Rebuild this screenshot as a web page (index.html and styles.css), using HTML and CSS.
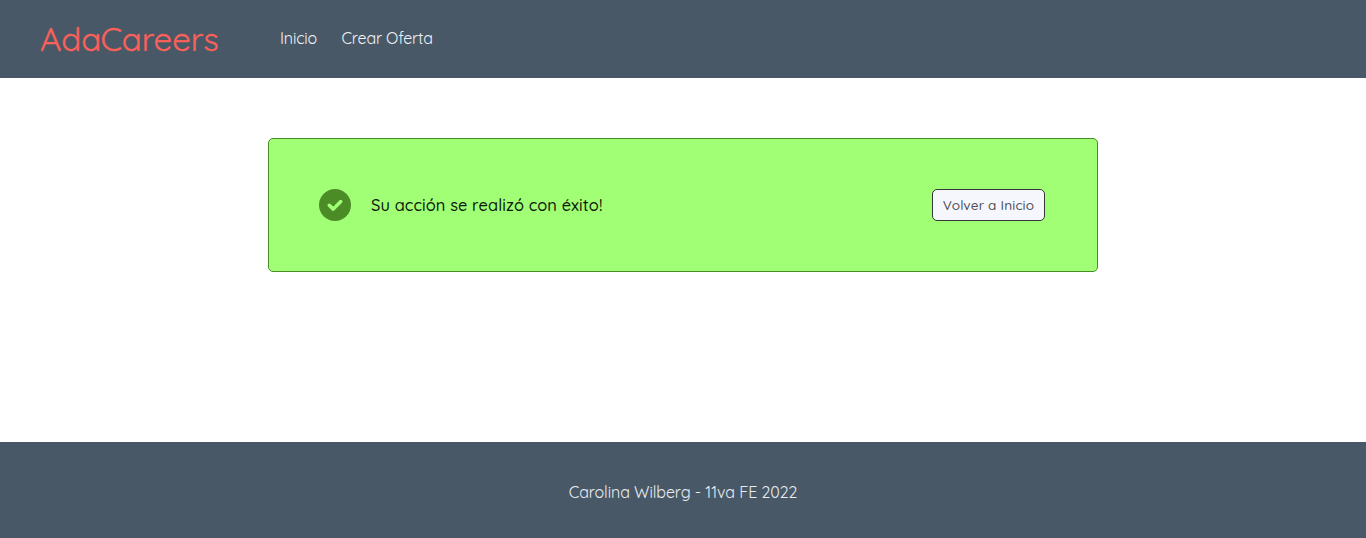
FILE: index.html
```html
<!DOCTYPE html>
<html lang="es">
<head>
<meta charset="utf-8">
<title>AdaCareers</title>
<link rel="stylesheet" href="styles.css">
</head>
<body>
<header class="navbar">
  <a class="brand">AdaCareers</a>
  <nav class="links"><a>Inicio</a><a>Crear Oferta</a></nav>
</header>
<main class="content">
  <section class="alert">
    <svg class="icon" viewBox="0 0 512 512"><path fill="#4c8c26" d="M256 0a256 256 0 1 0 0 512A256 256 0 0 0 256 0z"/><path fill="none" stroke="#a1ff75" stroke-width="56" stroke-linecap="round" stroke-linejoin="round" d="M164 260l64 62 120-122"/></svg>
    <p class="message">Su acción se realizó con éxito!</p>
    <button class="back">Volver a Inicio</button>
  </section>
</main>
<footer class="footer"><p class="credit">Carolina Wilberg - 11va FE 2022</p></footer>
</body>
</html>
```
FILE: styles.css
```css
* { box-sizing: border-box; margin: 0; }
body { min-height: 538px; display: flex; flex-direction: column; background: #fff; font: 16px/24px Quicksand, Lato, sans-serif; }
.navbar { height: 78px; display: flex; align-items: center; padding-left: 40px; background: #485866; color: #f0f2f6; }
.brand { width: 240px; color: #fb605b; font-size: 33px; font-weight: 400; line-height: 48px; letter-spacing: -0.1px; -webkit-text-stroke: 0.35px #fb605b; }
.links { display: flex; gap: 24.5px; padding-bottom: 2px; letter-spacing: -0.17px; }
.content { flex: 1; padding-top: 60px; }
.alert { width: 830px; height: 134px; margin: 0 auto; padding: 0 52px 0 50px; display: flex; align-items: center; border: 1px solid #4c8c26; border-radius: 5px; background: #a1ff75; }
.icon { width: 32px; height: 32px; margin-right: 20px; }
.message { color: #0c1a08; font-size: 16.4px; font-weight: 500; letter-spacing: 0.1px; }
.back { width: 113px; height: 32px; margin-left: auto; padding: 0; border: 1px solid #363636; border-radius: 5px; background: #f6f7fd; color: #4f5058; font: 500 13.6px/20px Quicksand, Lato, sans-serif; letter-spacing: 0.15px; white-space: nowrap; }
.footer { height: 96px; display: flex; align-items: center; justify-content: center; padding-top: 4px; background: #485866; color: #e8ecf2; }
.credit { letter-spacing: -0.09px; }
```
